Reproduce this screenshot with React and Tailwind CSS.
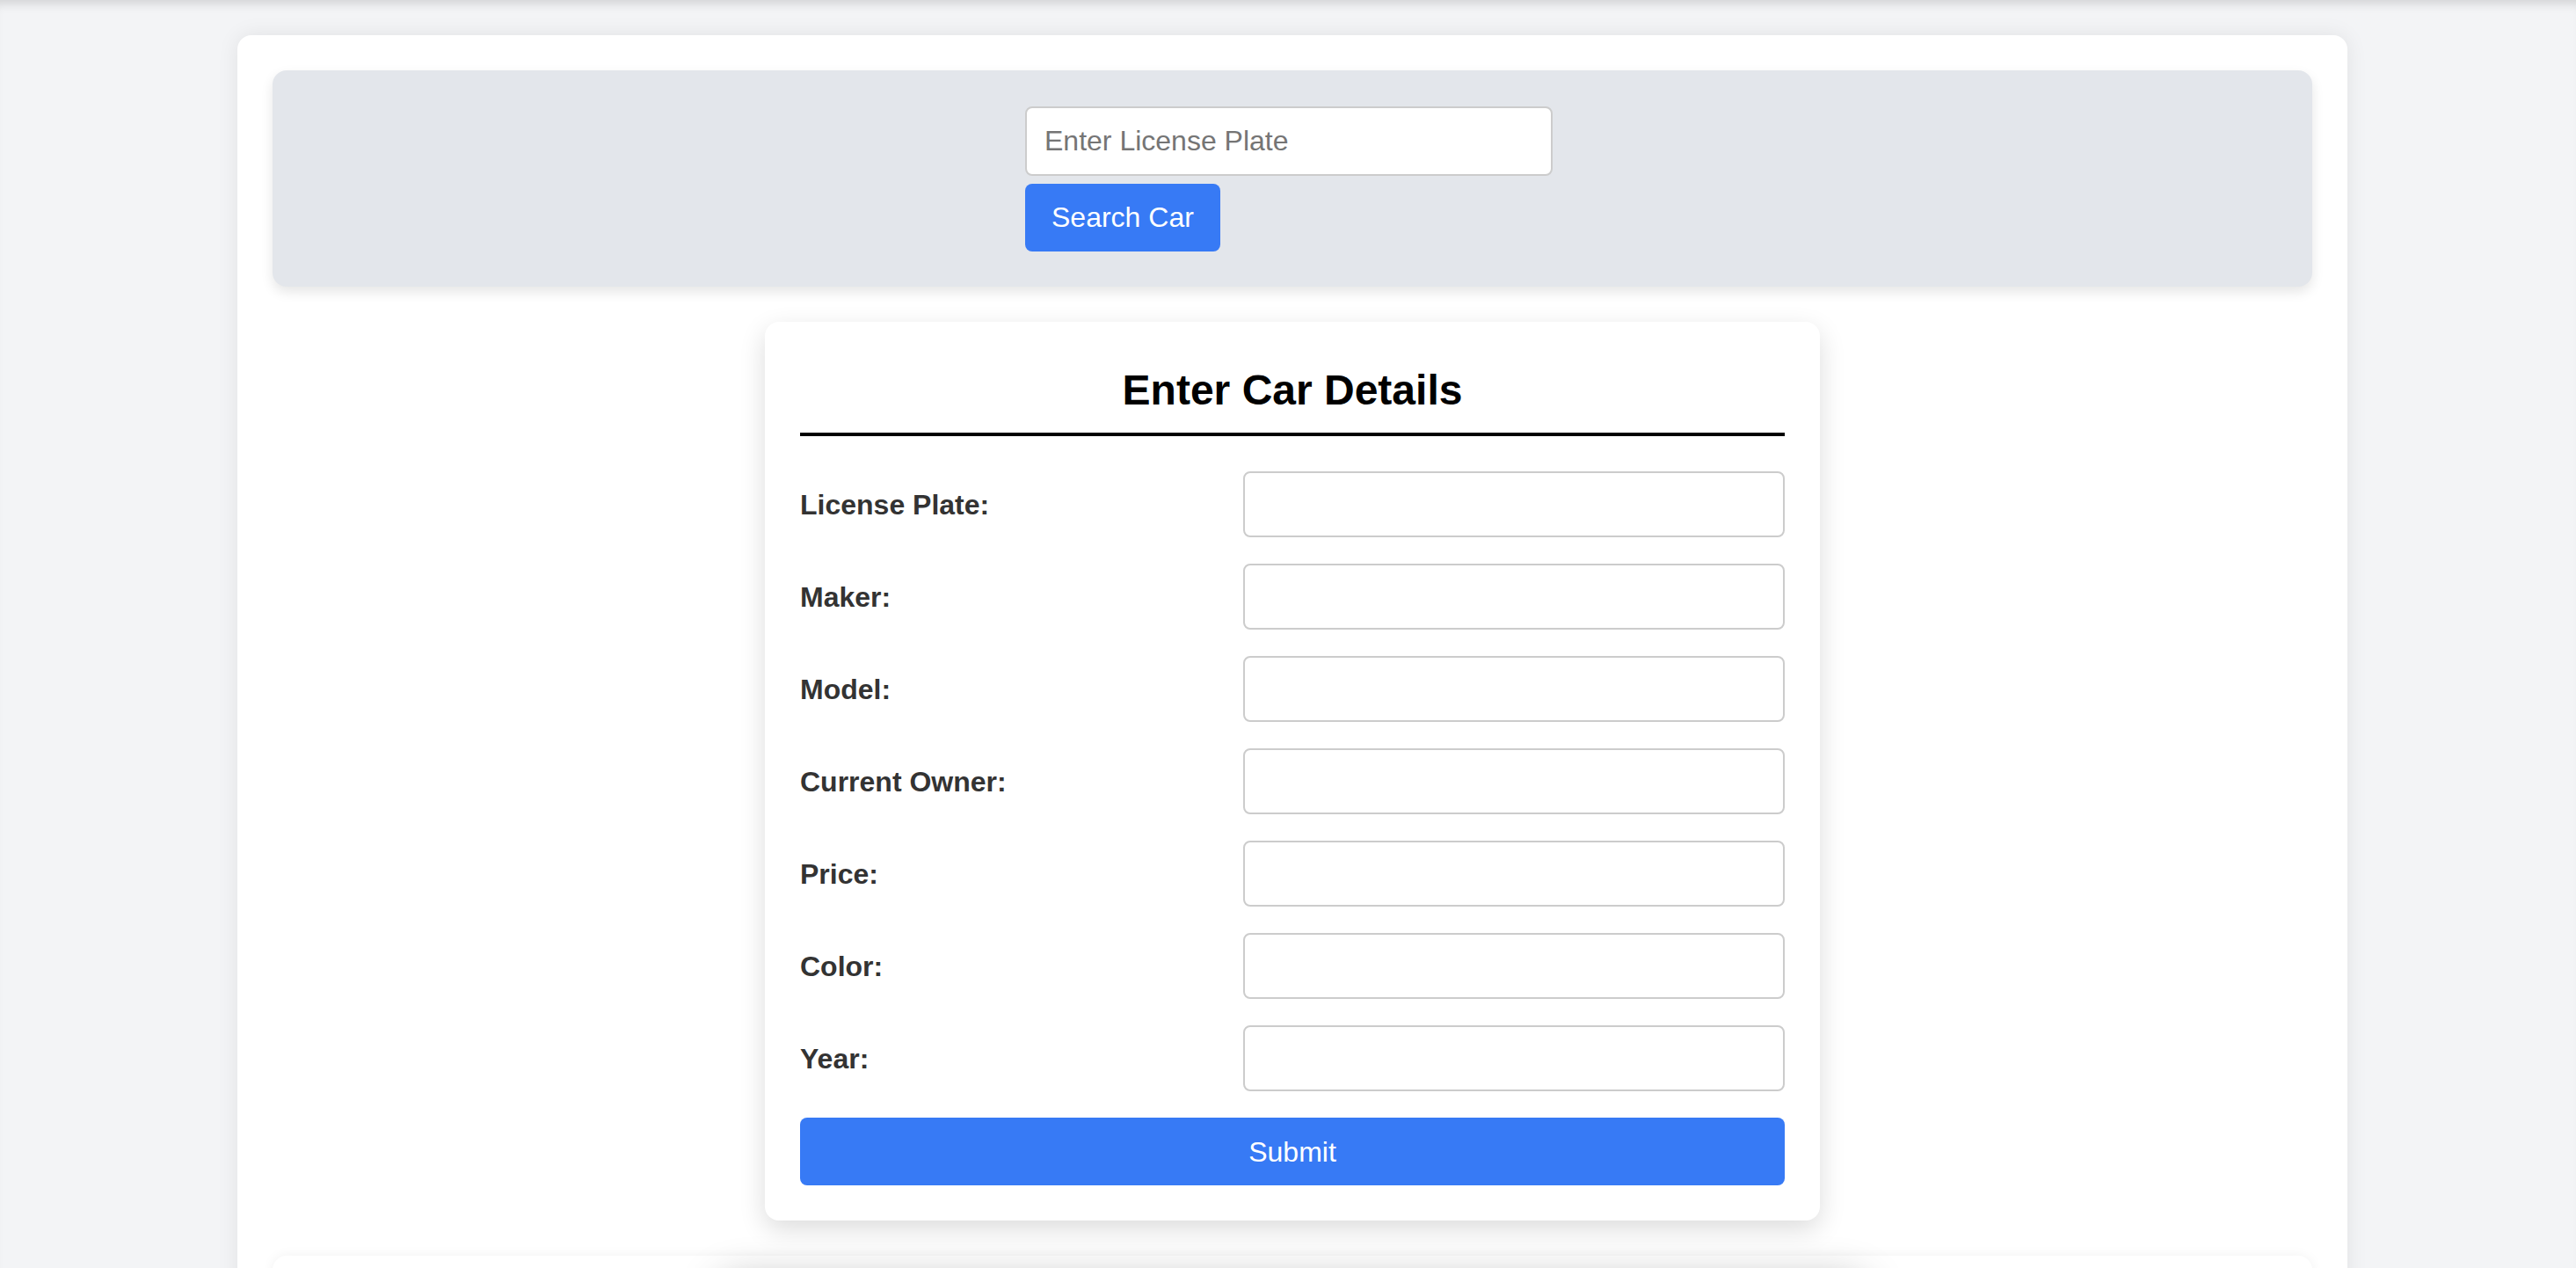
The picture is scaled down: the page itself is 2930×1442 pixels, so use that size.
import { useState } from 'react';

const fields = [
    { name: 'licensePlate', label: 'License Plate:' },
    { name: 'maker', label: 'Maker:' },
    { name: 'model', label: 'Model:' },
    { name: 'currentOwner', label: 'Current Owner:' },
    { name: 'price', label: 'Price:' },
    { name: 'color', label: 'Color:' },
    { name: 'year', label: 'Year:' },
];

function App() {
    const [plate, setPlate] = useState('');
    const [car, setCar] = useState({});

    const handleChange = (e) => {
        setCar({ ...car, [e.target.name]: e.target.value });
    };

    return (
        <div className="min-h-screen bg-[#f3f4f6] font-['Liberation_Sans',Arial,sans-serif] shadow-[inset_0_12px_12px_-8px_rgba(0,0,0,0.14)] overflow-hidden">
            <div className="pt-[40px] pl-[10px]">
                {/* contentor principal */}
                <div className="mx-auto w-[2400px] min-h-[1500px] bg-white rounded-[16px] p-[40px] shadow-[0_0_24px_rgba(0,0,0,0.08)]">
                    {/* Pesquisa */}
                    <div className="bg-[#e3e6eb] rounded-[16px] pt-[41px] pb-[40px] pr-[8px] shadow-[0_6px_14px_rgba(0,0,0,0.1)]">
                        <div className="w-[600px] mx-auto flex flex-col items-start gap-[9px]">
                            <input
                                className="w-full h-[79px] bg-white border-2 border-[#cccccc] rounded-[8px] px-[20px] text-[32px] text-[#222] placeholder:text-[#757575] outline-none"
                                placeholder="Enter License Plate"
                                value={plate}
                                onChange={(e) => setPlate(e.target.value)}
                            />
                            <button className="h-[77px] px-[30px] rounded-[8px] bg-[#377af5] text-white text-[32px] leading-[37px]">
                                Search Car
                            </button>
                        </div>
                    </div>

                    {/* Formulario */}
                    <div className="w-[1200px] mx-auto mt-[40px] bg-white rounded-[16px] p-[40px] shadow-[0_10px_30px_rgba(0,0,0,0.14)]">
                        <h2 className="text-center text-black text-[48px] font-bold leading-[55px] pt-[10px] pb-[21px] border-b-4 border-black">
                            Enter Car Details
                        </h2>
                        <div className="mt-[40px] flex flex-col gap-[30px]">
                            {fields.map((f) => (
                                <div key={f.name} className="flex items-center">
                                    <label className="w-[45%] text-[32px] font-bold text-[#333333]">{f.label}</label>
                                    <input
                                        name={f.name}
                                        value={car[f.name] || ''}
                                        onChange={handleChange}
                                        className="flex-1 min-w-0 h-[75px] border-2 border-[#cccccc] rounded-[8px] px-[16px] text-[32px] outline-none"
                                    />
                                </div>
                            ))}
                        </div>
                        <button className="mt-[30px] w-full h-[77px] rounded-[8px] bg-[#377af5] text-white text-[32px]">
                            Submit
                        </button>
                    </div>

                    {/* Lista (abaixo) */}
                    <div className="mt-[40px] bg-white rounded-[16px] pt-[30px] min-h-[400px] shadow-[0_0_14px_rgba(0,0,0,0.06)]">
                        <div className="w-[1300px] mx-auto h-[300px] bg-white rounded-[16px] shadow-[0_0_50px_rgba(0,0,0,0.3)]"></div>
                    </div>
                </div>
            </div>
        </div>
    );
}

export default App;
